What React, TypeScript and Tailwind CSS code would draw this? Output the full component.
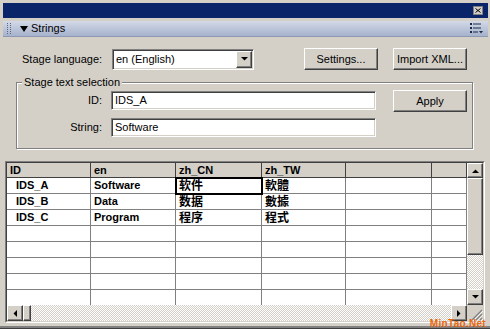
import React from "react";

const raised =
  "border border-t-white border-l-white border-r-[#404040] border-b-[#404040] shadow-[inset_-1px_-1px_0_#808080] bg-[#d4d0c8]";
const sunken =
  "border border-t-[#808080] border-l-[#808080] border-r-white border-b-white shadow-[inset_1px_1px_0_#404040,inset_-1px_-1px_0_#d4d0c8] bg-white";
const checker =
  "bg-[repeating-conic-gradient(#d4d0c8_0_25%,#ffffff_0_50%)] bg-[length:2px_2px]";

type Dir = "up" | "down" | "left" | "right";

const Arrow: React.FC<{ dir: Dir }> = ({ dir }) => {
  const pts: Record<Dir, string> = {
    up: "0,4 3.5,0.5 7,4",
    down: "0,0 7,0 3.5,3.5",
    left: "4,0 4,7 0.5,3.5",
    right: "0,0 0,7 3.5,3.5",
  };
  const vertical = dir === "up" || dir === "down";
  return (
    <svg
      width={vertical ? 7 : 4}
      height={vertical ? 4 : 7}
      viewBox={vertical ? "0 0 7 4" : "0 0 4 7"}
    >
      <polygon points={pts[dir]} fill="#000" />
    </svg>
  );
};

const ScrollBtn: React.FC<{ dir: Dir; className?: string }> = ({
  dir,
  className = "",
}) => (
  <div className={`${raised} flex items-center justify-center ${className}`}>
    <Arrow dir={dir} />
  </div>
);

const Button: React.FC<{ label: string; className?: string }> = ({
  label,
  className = "",
}) => (
  <div
    className={`${raised} w-[74px] h-[22px] flex items-center justify-center text-black ${className}`}
  >
    {label}
  </div>
);

const rows = [
  ["IDS_A", "Software", "软件", "軟體"],
  ["IDS_B", "Data", "数据", "數據"],
  ["IDS_C", "Program", "程序", "程式"],
];

const headers = ["ID", "en", "zh_CN", "zh_TW", "", ""];

export default function App() {
  const bodyRows = [...rows, ...Array.from({ length: 5 }, () => ["", "", "", ""])];

  return (
    <div className="relative w-[490px] h-[329px] bg-[#d4d0c8] overflow-hidden flex flex-col font-['Liberation_Sans',sans-serif] text-[11px] text-black border-b border-b-[#404040] shadow-[inset_0_-2px_0_#808080]">
      {/* title + panel header */}
      <div className="pt-[3px] pl-[3px] pr-[2px]">
        <div className="h-[15px] bg-[#0a246a] flex items-center justify-end pr-[5px]">
          <div className="w-[10px] h-[9px] bg-[#d4d0c8] border border-[#808080] flex items-center justify-center">
            <svg width="6" height="5" viewBox="0 0 6 5">
              <path d="M0.5 0.5 L5.5 4.5 M5.5 0.5 L0.5 4.5" stroke="#000" strokeWidth="1" />
            </svg>
          </div>
        </div>
        <div className="mt-[3px] h-[16px] bg-gradient-to-b from-[#d3d9e7] to-[#a6b2cc] border-b border-b-[#8e99b3] flex items-center">
          <svg width="4" height="11" viewBox="0 0 4 11" className="ml-[4px]">
            {[0, 2, 4, 6, 8, 10].map((y) => (
              <g key={y}>
                <rect x="0" y={y} width="1" height="1" fill="#5a6680" />
                <rect x="3" y={y} width="1" height="1" fill="#5a6680" />
              </g>
            ))}
          </svg>
          <svg width="8" height="6" viewBox="0 0 8 6" className="ml-[9px]">
            <polygon points="0,0 8,0 4,6" fill="#000" />
          </svg>
          <span className="ml-[3px] leading-none">Strings</span>
          <svg width="13" height="11" viewBox="0 0 13 11" className="ml-auto mr-[5px]">
            <rect x="0" y="0" width="2" height="2" fill="#1b2a4a" />
            <rect x="3" y="0.5" width="8" height="1" fill="#1b2a4a" />
            <rect x="0" y="4" width="2" height="2" fill="#1b2a4a" />
            <rect x="3" y="4.5" width="8" height="1" fill="#1b2a4a" />
            <rect x="0" y="8" width="2" height="2" fill="#1b2a4a" />
            <rect x="3" y="8.5" width="5" height="1" fill="#1b2a4a" />
            <polygon points="9,8 13,8 11,10.5" fill="#1b2a4a" />
          </svg>
        </div>
      </div>

      {/* stage language row */}
      <div className="mt-[11px] h-[22px] flex items-center">
        <span className="ml-[22px] w-[90px]">Stage language:</span>
        <div className={`${sunken} w-[142px] h-[21px] flex items-center`}>
          <span className="pl-[3px] flex-1">en (English)</span>
          <ScrollBtn dir="down" className="w-[16px] h-[17px] mr-[1px]" />
        </div>
        <Button label="Settings..." className="ml-[50px]" />
        <Button label="Import XML..." className="ml-[15px]" />
      </div>

      {/* stage text selection group */}
      <div className="relative mt-[12px] ml-[16px] w-[457px] h-[67px] border border-[#808080] shadow-[1px_1px_0_#fff,inset_1px_1px_0_#fff]">
        <span className="absolute -top-[8px] left-[5px] px-[2px] bg-[#d4d0c8] leading-[14px]">
          Stage text selection
        </span>
        <div className="flex pt-[7px]">
          <div className="flex flex-col gap-[8px] mt-[1px]">
            <div className="flex items-center">
              <span className="w-[85px] text-right">ID:</span>
              <div className={`${sunken} ml-[9px] w-[265px] h-[19px] flex items-center pl-[3px]`}>
                IDS_A
              </div>
            </div>
            <div className="flex items-center">
              <span className="w-[85px] text-right">String:</span>
              <div className={`${sunken} ml-[9px] w-[265px] h-[19px] flex items-center pl-[3px]`}>
                Software
              </div>
            </div>
          </div>
          <Button label="Apply" className="ml-[17px]" />
        </div>
      </div>

      {/* grid */}
      <div className="mt-[12px] ml-[5px] w-[480px] h-[162px] border border-t-[#808080] border-l-[#808080] border-r-white border-b-white">
        <div className="w-full h-full border border-t-[#404040] border-l-[#404040] border-r-[#d4d0c8] border-b-[#d4d0c8] flex flex-col">
          <div className="flex h-[142px]">
            <div className="w-[460px] h-[142px] overflow-hidden bg-white">
              <div className="grid grid-cols-[84px_85px_86px_84px_86px_35px] font-bold">
                {headers.map((h, i) => (
                  <div
                    key={`h${i}`}
                    className="h-[15px] bg-[#d4d0c8] border-r border-b border-r-[#404040] border-b-[#404040] pl-[3px] flex items-center leading-none"
                  >
                    {h}
                  </div>
                ))}
                {bodyRows.map((r, ri) =>
                  [...r, "", ""].map((c, ci) => {
                    const cjk = ci === 2 || ci === 3;
                    const selected = ri === 0 && ci === 2;
                    return (
                      <div
                        key={`${ri}-${ci}`}
                        className={`h-[16px] border-r border-b border-[#808080] flex items-center leading-none whitespace-nowrap ${
                          ci === 0 ? "pl-[9px]" : "pl-[3px]"
                        } ${
                          cjk
                            ? ci === 2
                              ? "font-['Liberation_Sans','Noto_Sans_CJK_SC',sans-serif] text-[12px]"
                              : "font-['Liberation_Sans','Noto_Sans_CJK_TC',sans-serif] text-[12px]"
                            : ""
                        } ${selected ? "relative z-10 outline-2 outline-black outline-offset-[-1px]" : ""}`}
                      >
                        {c}
                      </div>
                    );
                  })
                )}
              </div>
            </div>
            <div className="w-[16px] flex flex-col">
              <ScrollBtn dir="up" className="h-[15px]" />
              <div className={`${raised} h-[77px]`} />
              <div className={`${checker} flex-1`} />
              <ScrollBtn dir="down" className="h-[16px]" />
            </div>
          </div>
          <div className="flex h-[16px]">
            <ScrollBtn dir="left" className="w-[16px]" />
            <div className={`${raised} w-[8px]`} />
            <div className={`${checker} flex-1`} />
            <ScrollBtn dir="right" className="w-[16px]" />
            <div className="w-[16px] bg-[#d4d0c8] flex items-end justify-end">
              <svg width="12" height="12" viewBox="0 0 12 12">
                <path d="M11 1 L1 11 M11 5 L5 11 M11 9 L9 11" stroke="#808080" strokeWidth="1.2" />
                <path d="M12 2 L2 12 M12 6 L6 12 M12 10 L10 12" stroke="#fff" strokeWidth="0.8" />
              </svg>
            </div>
          </div>
        </div>
      </div>

      <span className="absolute right-[4px] bottom-[0px] text-[10px] font-bold leading-[9px] text-[#e8650c] tracking-[0.3px]">
        MinTao.Net
      </span>
    </div>
  );
}
